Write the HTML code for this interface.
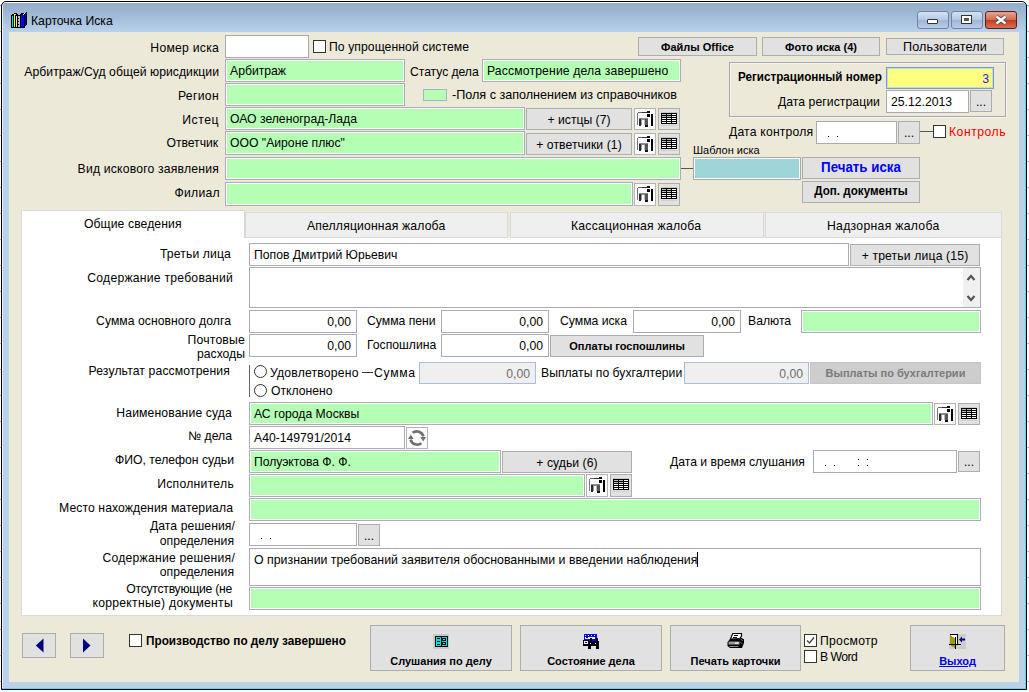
<!DOCTYPE html><html><head><meta charset="utf-8"><style>
html,body{margin:0;padding:0;}
body{width:1029px;height:692px;position:relative;overflow:hidden;background:#fff;font-family:"Liberation Sans",sans-serif;font-size:12px;color:#000;}
div{position:absolute;box-sizing:border-box;}
.t{white-space:nowrap;line-height:14px;}
.g{background:#b4ffb4;border:1px solid #aaadb8;box-shadow:inset 0 0 0 1px #fff;}
.w{background:#fff;border:1px solid #aaabb2;}
.b{background:#e1e1e1;border:1px solid #adadad;}
.ib1{background:#fbfbfb;border:1px solid #b4b4b4;}
.ib2{background:#e1e1e1;border:1px solid #adadad;}
.cb{background:#fff;border:1px solid #333;}
</style></head><body>

<div style="left:1px;top:1px;width:1026px;height:689px;border:1px solid #000;border-radius:5px 5px 0 0;background:#b9d1ea;box-shadow:inset -1px -1px 0 #62d2f4, inset 1px 0 0 #eef4fb;"></div>
<div style="left:0;top:5px;width:1px;height:1px;background:#a8a8a8"></div><div style="left:1027px;top:5px;width:2px;height:1px;background:#b8b8b8"></div>
<div style="left:0;top:31px;width:1px;height:1px;background:#a8a8a8"></div><div style="left:1027px;top:31px;width:2px;height:1px;background:#b8b8b8"></div>
<div style="left:0;top:57px;width:1px;height:1px;background:#a8a8a8"></div><div style="left:1027px;top:57px;width:2px;height:1px;background:#b8b8b8"></div>
<div style="left:0;top:83px;width:1px;height:1px;background:#a8a8a8"></div><div style="left:1027px;top:83px;width:2px;height:1px;background:#b8b8b8"></div>
<div style="left:0;top:109px;width:1px;height:1px;background:#a8a8a8"></div><div style="left:1027px;top:109px;width:2px;height:1px;background:#b8b8b8"></div>
<div style="left:0;top:135px;width:1px;height:1px;background:#a8a8a8"></div><div style="left:1027px;top:135px;width:2px;height:1px;background:#b8b8b8"></div>
<div style="left:0;top:161px;width:1px;height:1px;background:#a8a8a8"></div><div style="left:1027px;top:161px;width:2px;height:1px;background:#b8b8b8"></div>
<div style="left:0;top:187px;width:1px;height:1px;background:#a8a8a8"></div><div style="left:1027px;top:187px;width:2px;height:1px;background:#b8b8b8"></div>
<div style="left:0;top:213px;width:1px;height:1px;background:#a8a8a8"></div><div style="left:1027px;top:213px;width:2px;height:1px;background:#b8b8b8"></div>
<div style="left:0;top:239px;width:1px;height:1px;background:#a8a8a8"></div><div style="left:1027px;top:239px;width:2px;height:1px;background:#b8b8b8"></div>
<div style="left:0;top:265px;width:1px;height:1px;background:#a8a8a8"></div><div style="left:1027px;top:265px;width:2px;height:1px;background:#b8b8b8"></div>
<div style="left:0;top:291px;width:1px;height:1px;background:#a8a8a8"></div><div style="left:1027px;top:291px;width:2px;height:1px;background:#b8b8b8"></div>
<div style="left:0;top:317px;width:1px;height:1px;background:#a8a8a8"></div><div style="left:1027px;top:317px;width:2px;height:1px;background:#b8b8b8"></div>
<div style="left:0;top:343px;width:1px;height:1px;background:#a8a8a8"></div><div style="left:1027px;top:343px;width:2px;height:1px;background:#b8b8b8"></div>
<div style="left:0;top:369px;width:1px;height:1px;background:#a8a8a8"></div><div style="left:1027px;top:369px;width:2px;height:1px;background:#b8b8b8"></div>
<div style="left:0;top:395px;width:1px;height:1px;background:#a8a8a8"></div><div style="left:1027px;top:395px;width:2px;height:1px;background:#b8b8b8"></div>
<div style="left:0;top:421px;width:1px;height:1px;background:#a8a8a8"></div><div style="left:1027px;top:421px;width:2px;height:1px;background:#b8b8b8"></div>
<div style="left:0;top:447px;width:1px;height:1px;background:#a8a8a8"></div><div style="left:1027px;top:447px;width:2px;height:1px;background:#b8b8b8"></div>
<div style="left:0;top:473px;width:1px;height:1px;background:#a8a8a8"></div><div style="left:1027px;top:473px;width:2px;height:1px;background:#b8b8b8"></div>
<div style="left:0;top:499px;width:1px;height:1px;background:#a8a8a8"></div><div style="left:1027px;top:499px;width:2px;height:1px;background:#b8b8b8"></div>
<div style="left:0;top:525px;width:1px;height:1px;background:#a8a8a8"></div><div style="left:1027px;top:525px;width:2px;height:1px;background:#b8b8b8"></div>
<div style="left:0;top:551px;width:1px;height:1px;background:#a8a8a8"></div><div style="left:1027px;top:551px;width:2px;height:1px;background:#b8b8b8"></div>
<div style="left:0;top:577px;width:1px;height:1px;background:#a8a8a8"></div><div style="left:1027px;top:577px;width:2px;height:1px;background:#b8b8b8"></div>
<div style="left:0;top:603px;width:1px;height:1px;background:#a8a8a8"></div><div style="left:1027px;top:603px;width:2px;height:1px;background:#b8b8b8"></div>
<div style="left:0;top:629px;width:1px;height:1px;background:#a8a8a8"></div><div style="left:1027px;top:629px;width:2px;height:1px;background:#b8b8b8"></div>
<div style="left:0;top:655px;width:1px;height:1px;background:#a8a8a8"></div><div style="left:1027px;top:655px;width:2px;height:1px;background:#b8b8b8"></div>
<div style="left:0;top:681px;width:1px;height:1px;background:#a8a8a8"></div><div style="left:1027px;top:681px;width:2px;height:1px;background:#b8b8b8"></div>
<div style="left:3px;top:2px;width:1022px;height:30px;border-radius:4px 4px 0 0;background:linear-gradient(#fff 0,#fff 1px,#93adcb 1px,#9db6d3 10px,#b9d1ea 30px);"></div>
<div style="left:9px;top:32px;width:1010px;height:650px;background:#ece9d8;"></div>
<svg style="position:absolute;left:11px;top:12px" width="17" height="17" viewBox="0 0 17 17" shape-rendering="crispEdges">
<path d="M3 1 H6 V2 H7 V3 H9 V2 H10 V1 H15 V0 H16 V13 H15 V14 H14 V16 H0 V3 H1 V2 H3 Z" fill="#000"/>
<rect x="1" y="4" width="1" height="11" fill="#00e8e8"/><rect x="3" y="2" width="1" height="13" fill="#ffff00"/><rect x="4" y="2" width="1" height="1" fill="#ffff00"/>
<rect x="5" y="4" width="1" height="11" fill="#e0e0e0"/><rect x="7" y="4" width="2" height="11" fill="#c0c0c0"/><rect x="7" y="6" width="1" height="1" fill="#000"/><rect x="7" y="9" width="1" height="1" fill="#000"/><rect x="7" y="12" width="1" height="1" fill="#000"/>
<rect x="10" y="3" width="3" height="12" fill="#0000ff"/><rect x="14" y="2" width="1" height="11" fill="#0000c0"/><rect x="12" y="2" width="1" height="1" fill="#fff"/><rect x="13" y="1" width="1" height="1" fill="#fff"/>
</svg>
<div class="t" style="left:31px;top:14px;font-size:12.2px;color:#000">Карточка Иска</div>
<div style="left:917px;top:11px;width:32px;height:18px;border:1px solid #6d83a3;border-radius:3px;background:linear-gradient(#d5e2f1,#b4c8e2 50%,#9db5d6 51%,#b9cde6);"></div>
<div style="left:927px;top:19px;width:11px;height:5px;background:#fff;border:1px solid #333;border-radius:1px"></div>
<div style="left:951px;top:11px;width:32px;height:18px;border:1px solid #6d83a3;border-radius:3px;background:linear-gradient(#d5e2f1,#b4c8e2 50%,#9db5d6 51%,#b9cde6);"></div>
<div style="left:961px;top:15px;width:11px;height:9px;background:#fff;border:1px solid #333;"></div>
<div style="left:964px;top:18px;width:5px;height:3px;background:#555;"></div>
<div style="left:985px;top:11px;width:32px;height:18px;border:1px solid #5a1e14;border-radius:3px;background:linear-gradient(#e8a493,#d2674e 50%,#c43b1c 51%,#d8715a);"></div>
<svg style="position:absolute;left:994px;top:15px" width="14" height="10" viewBox="0 0 14 10"><path d="M2.5 1.5 L11.5 8.5 M11.5 1.5 L2.5 8.5" stroke="#444" stroke-width="4"/><path d="M2.5 1.5 L11.5 8.5 M11.5 1.5 L2.5 8.5" stroke="#fff" stroke-width="2.4"/></svg>
<div class="t" style="right:810px;top:41px;font-size:12.2px;letter-spacing:0.246px;">Номер иска</div>
<div class="w" style="left:225px;top:35px;width:84px;height:23px;"></div>
<div class="cb" style="left:313px;top:40px;width:13px;height:13px;"></div>
<div class="t" style="left:329px;top:40px;font-size:12.2px;letter-spacing:0.070px;">По упрощенной системе</div>
<div class="b" style="left:638px;top:37px;width:119px;height:19px;"></div>
<div class="t" style="left:638px;width:119px;text-align:center;top:40px;font-size:11px;;font-weight:bold">Файлы Office</div>
<div class="b" style="left:762px;top:37px;width:118px;height:19px;"></div>
<div class="t" style="left:762px;width:118px;text-align:center;top:40px;font-size:11px;;font-weight:bold">Фото иска (4)</div>
<div class="b" style="left:886px;top:38px;width:118px;height:17px;"></div>
<div class="t" style="left:886px;width:118px;text-align:center;top:40px;font-size:12.6px;letter-spacing:0.162px;">Пользователи</div>
<div class="t" style="right:810px;top:65px;font-size:12.2px;letter-spacing:0.036px;">Арбитраж/Суд общей юрисдикции</div>
<div class="g" style="left:225px;top:59px;width:180px;height:23px;"></div>
<div class="t" style="left:230px;top:64px;font-size:12.2px;">Арбитраж</div>
<div class="t" style="left:410px;top:65px;font-size:12.2px;letter-spacing:-0.060px;">Статус дела</div>
<div class="g" style="left:482px;top:59px;width:199px;height:23px;"></div>
<div class="t" style="left:487px;top:64px;font-size:12.2px;letter-spacing:0.145px;">Рассмотрение дела завершено</div>
<div class="t" style="right:810px;top:89px;font-size:12.2px;letter-spacing:0.320px;">Регион</div>
<div class="g" style="left:225px;top:83px;width:180px;height:23px;"></div>
<div style="left:423px;top:89px;width:24px;height:12px;background:#b4ffb4;border:1px solid #a4b4cc;"></div>
<div class="t" style="left:452px;top:88px;font-size:12.6px;">-Поля с заполнением из справочников</div>
<div style="left:729px;top:62px;width:277px;height:55px;border:1px solid #aaa6b4;box-shadow:inset 1px 1px 0 #f6f4ec, 1px 1px 0 #f6f4ec;"></div>
<div class="t" style="left:738px;top:70px;font-size:13px;transform:scaleX(0.897);transform-origin:left;font-weight:bold">Регистрационный номер</div>
<div style="left:886px;top:67px;width:108px;height:22px;background:#ffff80;border:1px solid #7a9cc6;box-shadow:inset 0 0 0 1px #c6d6ea"></div>
<div class="t" style="right:40px;top:72px;font-size:12.2px;color:#1a1af0">3</div>
<div class="t" style="right:149px;top:95px;font-size:12.2px;letter-spacing:0.066px;">Дата регистрации</div>
<div class="w" style="left:886px;top:90px;width:83px;height:23px;"></div>
<div class="t" style="left:891px;top:95px;font-size:12.2px;">25.12.2013</div>
<div class="b" style="left:970px;top:90px;width:22px;height:22px;"></div>
<div class="t" style="left:970px;width:22px;text-align:center;top:95px;font-size:12.2px;">...</div>
<div class="t" style="right:810px;top:113px;font-size:12.2px;letter-spacing:0.550px;">Истец</div>
<div class="g" style="left:225px;top:107px;width:300px;height:23px;"></div>
<div class="t" style="left:230px;top:112px;font-size:12.2px;">ОАО зеленоград-Лада</div>
<div class="b" style="left:526px;top:108px;width:106px;height:22px;"></div>
<div class="t" style="left:526px;width:106px;text-align:center;top:113px;font-size:12.2px;">+ истцы (7)</div>
<div class="ib1" style="left:634px;top:108px;width:22px;height:22px;"><svg width="22" height="22" viewBox="0 0 22 22" shape-rendering="crispEdges" style="position:absolute;left:-1px;top:-1px"><rect x="1" y="1" width="20" height="20" fill="#fbfbfb"/><rect x="4" y="4" width="4" height="1" fill="#666"/><rect x="8" y="4" width="5" height="1" fill="#333"/><rect x="13" y="3" width="3" height="2" fill="#111"/><rect x="3" y="5" width="1" height="12" fill="#777"/><rect x="13" y="6" width="3" height="3" fill="#000"/><rect x="17" y="6" width="2" height="12" fill="#000"/><rect x="5" y="10" width="9" height="2" fill="#8a8a8a"/><rect x="5" y="11" width="2" height="7" fill="#2a2a2a"/><rect x="7" y="12" width="1" height="5" fill="#9a9a9a"/><rect x="11" y="11" width="3" height="6" fill="#555"/><rect x="11" y="17" width="3" height="2" fill="#111"/><rect x="10" y="12" width="1" height="5" fill="#bbb"/></svg></div>
<div class="ib2" style="left:658px;top:108px;width:22px;height:22px;"><svg width="22" height="22" viewBox="0 0 22 22" shape-rendering="crispEdges" style="position:absolute;left:-1px;top:-1px"><rect x="3" y="4" width="16" height="1" fill="#c8c8c8"/><rect x="3" y="5" width="16" height="11" fill="#000"/><rect x="4" y="6" width="4" height="1" fill="#bbb"/><rect x="9" y="6" width="4" height="1" fill="#bbb"/><rect x="14" y="6" width="4" height="1" fill="#fff"/><rect x="4" y="8" width="4" height="1" fill="#bbb"/><rect x="9" y="8" width="4" height="1" fill="#bbb"/><rect x="14" y="8" width="4" height="1" fill="#fff"/><rect x="4" y="10" width="4" height="1" fill="#fff"/><rect x="9" y="10" width="4" height="1" fill="#fff"/><rect x="14" y="10" width="4" height="1" fill="#fff"/><rect x="4" y="12" width="4" height="1" fill="#fff"/><rect x="9" y="12" width="4" height="1" fill="#fff"/><rect x="14" y="12" width="4" height="1" fill="#fff"/><rect x="4" y="14" width="4" height="1" fill="#fff"/><rect x="9" y="14" width="4" height="1" fill="#fff"/><rect x="14" y="14" width="4" height="1" fill="#fff"/><rect x="3" y="17" width="16" height="1" fill="#d0d0d0"/></svg></div>
<div class="t" style="left:729px;top:125px;font-size:12.2px;letter-spacing:0.180px;">Дата контроля</div>
<div class="w" style="left:816px;top:121px;width:81px;height:23px;"></div>
<div style="left:828px;top:136px;width:1px;height:1px;background:#10004a"></div>
<div style="left:837px;top:136px;width:1px;height:1px;background:#10004a"></div>
<div class="b" style="left:898px;top:121px;width:22px;height:23px;"></div>
<div class="t" style="left:898px;width:22px;text-align:center;top:126px;font-size:12.2px;">...</div>
<div style="left:920px;top:131px;width:13px;height:1px;background:#555"></div>
<div class="cb" style="left:933px;top:125px;width:13px;height:13px;"></div>
<div class="t" style="left:949px;top:125px;font-size:12.2px;letter-spacing:0.521px;color:#ff0000">Контроль</div>
<div class="t" style="right:811px;top:136px;font-size:12.2px;letter-spacing:-0.050px;">Ответчик</div>
<div class="g" style="left:225px;top:131px;width:300px;height:24px;"></div>
<div class="t" style="left:230px;top:136px;font-size:12.2px;">ООО "Аироне плюс"</div>
<div class="b" style="left:526px;top:133px;width:106px;height:22px;"></div>
<div class="t" style="left:526px;width:106px;text-align:center;top:138px;font-size:12.2px;letter-spacing:0.084px;">+ ответчики (1)</div>
<div class="ib1" style="left:634px;top:133px;width:22px;height:22px;"><svg width="22" height="22" viewBox="0 0 22 22" shape-rendering="crispEdges" style="position:absolute;left:-1px;top:-1px"><rect x="1" y="1" width="20" height="20" fill="#fbfbfb"/><rect x="4" y="4" width="4" height="1" fill="#666"/><rect x="8" y="4" width="5" height="1" fill="#333"/><rect x="13" y="3" width="3" height="2" fill="#111"/><rect x="3" y="5" width="1" height="12" fill="#777"/><rect x="13" y="6" width="3" height="3" fill="#000"/><rect x="17" y="6" width="2" height="12" fill="#000"/><rect x="5" y="10" width="9" height="2" fill="#8a8a8a"/><rect x="5" y="11" width="2" height="7" fill="#2a2a2a"/><rect x="7" y="12" width="1" height="5" fill="#9a9a9a"/><rect x="11" y="11" width="3" height="6" fill="#555"/><rect x="11" y="17" width="3" height="2" fill="#111"/><rect x="10" y="12" width="1" height="5" fill="#bbb"/></svg></div>
<div class="ib2" style="left:658px;top:133px;width:22px;height:22px;"><svg width="22" height="22" viewBox="0 0 22 22" shape-rendering="crispEdges" style="position:absolute;left:-1px;top:-1px"><rect x="3" y="4" width="16" height="1" fill="#c8c8c8"/><rect x="3" y="5" width="16" height="11" fill="#000"/><rect x="4" y="6" width="4" height="1" fill="#bbb"/><rect x="9" y="6" width="4" height="1" fill="#bbb"/><rect x="14" y="6" width="4" height="1" fill="#fff"/><rect x="4" y="8" width="4" height="1" fill="#bbb"/><rect x="9" y="8" width="4" height="1" fill="#bbb"/><rect x="14" y="8" width="4" height="1" fill="#fff"/><rect x="4" y="10" width="4" height="1" fill="#fff"/><rect x="9" y="10" width="4" height="1" fill="#fff"/><rect x="14" y="10" width="4" height="1" fill="#fff"/><rect x="4" y="12" width="4" height="1" fill="#fff"/><rect x="9" y="12" width="4" height="1" fill="#fff"/><rect x="14" y="12" width="4" height="1" fill="#fff"/><rect x="4" y="14" width="4" height="1" fill="#fff"/><rect x="9" y="14" width="4" height="1" fill="#fff"/><rect x="14" y="14" width="4" height="1" fill="#fff"/><rect x="3" y="17" width="16" height="1" fill="#d0d0d0"/></svg></div>
<div class="t" style="right:810px;top:162px;font-size:12.2px;letter-spacing:0.190px;">Вид искового заявления</div>
<div class="g" style="left:225px;top:157px;width:456px;height:23px;"></div>
<div style="left:681px;top:168px;width:13px;height:1px;background:#555"></div>
<div class="t" style="left:693px;top:143px;font-size:11px;">Шаблон иска</div>
<div style="left:693px;top:157px;width:108px;height:23px;background:#9ed5d8;border:1px solid #a9a9a9;box-shadow:inset 0 0 0 1px #fff"></div>
<div class="b" style="left:802px;top:157px;width:118px;height:22px;"></div>
<div class="t" style="left:802px;width:118px;text-align:center;top:160px;font-size:14px;transform:scaleX(0.95);transform-origin:center;color:#0000ff;font-weight:bold">Печать иска</div>
<div class="t" style="right:809px;top:186px;font-size:12.2px;letter-spacing:0.280px;">Филиал</div>
<div class="g" style="left:225px;top:182px;width:408px;height:24px;"></div>
<div class="ib1" style="left:634px;top:183px;width:22px;height:23px;"><svg width="22" height="22" viewBox="0 0 22 22" shape-rendering="crispEdges" style="position:absolute;left:-1px;top:-1px"><rect x="1" y="1" width="20" height="20" fill="#fbfbfb"/><rect x="4" y="4" width="4" height="1" fill="#666"/><rect x="8" y="4" width="5" height="1" fill="#333"/><rect x="13" y="3" width="3" height="2" fill="#111"/><rect x="3" y="5" width="1" height="12" fill="#777"/><rect x="13" y="6" width="3" height="3" fill="#000"/><rect x="17" y="6" width="2" height="12" fill="#000"/><rect x="5" y="10" width="9" height="2" fill="#8a8a8a"/><rect x="5" y="11" width="2" height="7" fill="#2a2a2a"/><rect x="7" y="12" width="1" height="5" fill="#9a9a9a"/><rect x="11" y="11" width="3" height="6" fill="#555"/><rect x="11" y="17" width="3" height="2" fill="#111"/><rect x="10" y="12" width="1" height="5" fill="#bbb"/></svg></div>
<div class="ib2" style="left:658px;top:183px;width:22px;height:23px;"><svg width="22" height="22" viewBox="0 0 22 22" shape-rendering="crispEdges" style="position:absolute;left:-1px;top:-1px"><rect x="3" y="4" width="16" height="1" fill="#c8c8c8"/><rect x="3" y="5" width="16" height="11" fill="#000"/><rect x="4" y="6" width="4" height="1" fill="#bbb"/><rect x="9" y="6" width="4" height="1" fill="#bbb"/><rect x="14" y="6" width="4" height="1" fill="#fff"/><rect x="4" y="8" width="4" height="1" fill="#bbb"/><rect x="9" y="8" width="4" height="1" fill="#bbb"/><rect x="14" y="8" width="4" height="1" fill="#fff"/><rect x="4" y="10" width="4" height="1" fill="#fff"/><rect x="9" y="10" width="4" height="1" fill="#fff"/><rect x="14" y="10" width="4" height="1" fill="#fff"/><rect x="4" y="12" width="4" height="1" fill="#fff"/><rect x="9" y="12" width="4" height="1" fill="#fff"/><rect x="14" y="12" width="4" height="1" fill="#fff"/><rect x="4" y="14" width="4" height="1" fill="#fff"/><rect x="9" y="14" width="4" height="1" fill="#fff"/><rect x="14" y="14" width="4" height="1" fill="#fff"/><rect x="3" y="17" width="16" height="1" fill="#d0d0d0"/></svg></div>
<div class="b" style="left:802px;top:181px;width:118px;height:22px;"></div>
<div class="t" style="left:802px;width:118px;text-align:center;top:184px;font-size:13px;transform:scaleX(0.895);transform-origin:center;;font-weight:bold">Доп. документы</div>
<div style="left:21px;top:237px;width:981px;height:379px;background:#fff;border:1px solid #d9d9d9;border-top:none"></div>
<div style="left:21px;top:210px;width:224px;height:28px;background:#fff;border:1px solid #d9d9d9;border-bottom:none"></div>
<div style="left:245px;top:212px;width:263px;height:26px;background:#efefef;border:1px solid #d9d9d9;"></div>
<div style="left:510px;top:212px;width:254px;height:26px;background:#efefef;border:1px solid #d9d9d9;"></div>
<div style="left:765px;top:212px;width:237px;height:26px;background:#efefef;border:1px solid #d9d9d9;"></div>
<div class="t" style="left:84px;top:217px;font-size:12.2px;letter-spacing:0.082px;">Общие сведения</div>
<div class="t" style="left:307px;top:219px;font-size:12.2px;letter-spacing:0.163px;">Апелляционная жалоба</div>
<div class="t" style="left:571px;top:219px;font-size:12.2px;letter-spacing:0.222px;">Кассационная жалоба</div>
<div class="t" style="left:827px;top:219px;font-size:12.2px;letter-spacing:0.304px;">Надзорная жалоба</div>
<div class="t" style="right:798px;top:247px;font-size:12.2px;letter-spacing:0.120px;">Третьи лица</div>
<div class="w" style="left:249px;top:243px;width:600px;height:23px;"></div>
<div class="t" style="left:254px;top:248px;font-size:12.2px;">Попов Дмитрий Юрьевич</div>
<div class="b" style="left:850px;top:244px;width:130px;height:22px;"></div>
<div class="t" style="left:850px;width:130px;text-align:center;top:249px;font-size:12.2px;letter-spacing:0.143px;">+ третьи лица (15)</div>
<div class="t" style="right:796px;top:271px;font-size:12.2px;letter-spacing:0.230px;">Содержание требований</div>
<div class="w" style="left:249px;top:267px;width:732px;height:41px;"></div>
<div style="left:963px;top:268px;width:17px;height:39px;background:#f0f0f0"></div>
<svg style="position:absolute;left:966px;top:273px" width="10" height="30" viewBox="0 0 10 30"><path d="M1.5 7 L5 3 L8.5 7" stroke="#555" stroke-width="2.2" fill="none"/><path d="M1.5 23 L5 27 L8.5 23" stroke="#555" stroke-width="2.2" fill="none"/></svg>
<div class="t" style="right:798px;top:314px;font-size:12.2px;letter-spacing:0.040px;">Сумма основного долга</div>
<div class="w" style="left:249px;top:310px;width:108px;height:23px;"></div>
<div class="t" style="right:678px;top:315px;font-size:12.2px;">0,00</div>
<div class="t" style="left:367px;top:314px;font-size:12.2px;">Сумма пени</div>
<div class="w" style="left:441px;top:310px;width:108px;height:23px;"></div>
<div class="t" style="right:486px;top:315px;font-size:12.2px;">0,00</div>
<div class="t" style="left:560px;top:314px;font-size:12.2px;">Сумма иска</div>
<div class="w" style="left:633px;top:310px;width:108px;height:23px;"></div>
<div class="t" style="right:294px;top:315px;font-size:12.2px;">0,00</div>
<div class="t" style="left:748px;top:314px;font-size:12.2px;">Валюта</div>
<div class="g" style="left:801px;top:310px;width:180px;height:23px;"></div>
<div class="t" style="right:784px;top:333px;font-size:12.2px;letter-spacing:0.202px;">Почтовые</div>
<div class="t" style="right:784px;top:347px;font-size:12.2px;">расходы</div>
<div class="w" style="left:249px;top:334px;width:108px;height:23px;"></div>
<div class="t" style="right:678px;top:339px;font-size:12.2px;">0,00</div>
<div class="t" style="left:367px;top:338px;font-size:12.2px;">Госпошлина</div>
<div class="w" style="left:441px;top:334px;width:108px;height:23px;"></div>
<div class="t" style="right:486px;top:339px;font-size:12.2px;">0,00</div>
<div class="b" style="left:550px;top:335px;width:154px;height:22px;"></div>
<div class="t" style="left:550px;width:154px;text-align:center;top:339px;font-size:11px;;font-weight:bold">Оплаты госпошлины</div>
<div class="t" style="right:799px;top:364px;font-size:12.2px;letter-spacing:0.126px;">Результат рассмотрения</div>
<div style="left:249px;top:365px;width:1px;height:32px;background:#666"></div>
<div style="left:254px;top:365px;width:13px;height:13px;border:1px solid #333;border-radius:50%;background:#fff"></div>
<div style="left:254px;top:384px;width:13px;height:13px;border:1px solid #333;border-radius:50%;background:#fff"></div>
<div class="t" style="left:270px;top:366px;font-size:12.2px;letter-spacing:0.194px;">Удовлетворено</div>
<div style="left:362px;top:372px;width:11px;height:1px;background:#333"></div>
<div class="t" style="left:374px;top:366px;font-size:12.2px;letter-spacing:0.700px;">Сумма</div>
<div style="left:419px;top:362px;width:117px;height:22px;background:#efefef;border:1px solid #a8bedc;"></div>
<div class="t" style="right:499px;top:367px;font-size:12.2px;color:#6d6d6d">0,00</div>
<div class="t" style="left:541px;top:366px;font-size:12.2px;">Выплаты по бухгалтерии</div>
<div style="left:684px;top:362px;width:125px;height:22px;background:#efefef;border:1px solid #a8bedc;"></div>
<div class="t" style="right:226px;top:367px;font-size:12.2px;color:#6d6d6d">0,00</div>
<div style="left:810px;top:362px;width:171px;height:22px;background:#cdcdcd;border:1px solid #c6c6c6"></div>
<div class="t" style="left:810px;width:171px;text-align:center;top:366px;font-size:11px;color:#7a7a7a;font-weight:bold">Выплаты по бухгалтерии</div>
<div class="t" style="left:271px;top:384px;font-size:12.2px;">Отклонено</div>
<div class="t" style="right:797px;top:406px;font-size:12.2px;letter-spacing:0.126px;">Наименование суда</div>
<div class="g" style="left:249px;top:402px;width:684px;height:23px;"></div>
<div class="t" style="left:254px;top:407px;font-size:12.2px;">АС города Москвы</div>
<div class="ib1" style="left:934px;top:403px;width:22px;height:22px;"><svg width="22" height="22" viewBox="0 0 22 22" shape-rendering="crispEdges" style="position:absolute;left:-1px;top:-1px"><rect x="1" y="1" width="20" height="20" fill="#fbfbfb"/><rect x="4" y="4" width="4" height="1" fill="#666"/><rect x="8" y="4" width="5" height="1" fill="#333"/><rect x="13" y="3" width="3" height="2" fill="#111"/><rect x="3" y="5" width="1" height="12" fill="#777"/><rect x="13" y="6" width="3" height="3" fill="#000"/><rect x="17" y="6" width="2" height="12" fill="#000"/><rect x="5" y="10" width="9" height="2" fill="#8a8a8a"/><rect x="5" y="11" width="2" height="7" fill="#2a2a2a"/><rect x="7" y="12" width="1" height="5" fill="#9a9a9a"/><rect x="11" y="11" width="3" height="6" fill="#555"/><rect x="11" y="17" width="3" height="2" fill="#111"/><rect x="10" y="12" width="1" height="5" fill="#bbb"/></svg></div>
<div class="ib2" style="left:958px;top:403px;width:22px;height:22px;"><svg width="22" height="22" viewBox="0 0 22 22" shape-rendering="crispEdges" style="position:absolute;left:-1px;top:-1px"><rect x="3" y="4" width="16" height="1" fill="#c8c8c8"/><rect x="3" y="5" width="16" height="11" fill="#000"/><rect x="4" y="6" width="4" height="1" fill="#bbb"/><rect x="9" y="6" width="4" height="1" fill="#bbb"/><rect x="14" y="6" width="4" height="1" fill="#fff"/><rect x="4" y="8" width="4" height="1" fill="#bbb"/><rect x="9" y="8" width="4" height="1" fill="#bbb"/><rect x="14" y="8" width="4" height="1" fill="#fff"/><rect x="4" y="10" width="4" height="1" fill="#fff"/><rect x="9" y="10" width="4" height="1" fill="#fff"/><rect x="14" y="10" width="4" height="1" fill="#fff"/><rect x="4" y="12" width="4" height="1" fill="#fff"/><rect x="9" y="12" width="4" height="1" fill="#fff"/><rect x="14" y="12" width="4" height="1" fill="#fff"/><rect x="4" y="14" width="4" height="1" fill="#fff"/><rect x="9" y="14" width="4" height="1" fill="#fff"/><rect x="14" y="14" width="4" height="1" fill="#fff"/><rect x="3" y="17" width="16" height="1" fill="#d0d0d0"/></svg></div>
<div class="t" style="right:797px;top:429px;font-size:12.2px;">№ дела</div>
<div class="w" style="left:249px;top:426px;width:156px;height:23px;"></div>
<div class="t" style="left:254px;top:431px;font-size:12.2px;">А40-149791/2014</div>
<div class="ib1" style="left:406px;top:427px;width:22px;height:22px;"></div>
<svg style="position:absolute;left:404px;top:425px" width="26" height="26" viewBox="0 0 26 26"><path d="M8.6 7.8 A6.8 6.8 0 0 1 19.4 11.4" stroke="#707070" stroke-width="2.7" fill="none"/><path d="M16.3 12 L22 12 L19.2 16.6 Z" fill="#707070"/><path d="M17.4 18.2 A6.8 6.8 0 0 1 6.6 14.6" stroke="#707070" stroke-width="2.7" fill="none"/><path d="M4 14 L9.7 14 L6.8 9.4 Z" fill="#707070"/></svg>
<div class="t" style="right:795px;top:453px;font-size:12.2px;letter-spacing:-0.000px;">ФИО, телефон судьи</div>
<div class="g" style="left:249px;top:450px;width:252px;height:23px;"></div>
<div class="t" style="left:254px;top:455px;font-size:12.2px;letter-spacing:-0.042px;">Полуэктова Ф. Ф.</div>
<div class="b" style="left:502px;top:451px;width:130px;height:22px;"></div>
<div class="t" style="left:502px;width:130px;text-align:center;top:456px;font-size:12.2px;letter-spacing:0.040px;">+ судьи (6)</div>
<div class="t" style="left:670px;top:455px;font-size:12.2px;">Дата и время слушания</div>
<div class="w" style="left:813px;top:450px;width:144px;height:23px;"></div>
<div style="left:825px;top:465px;width:1px;height:1px;background:#10004a"></div>
<div style="left:834px;top:465px;width:1px;height:1px;background:#10004a"></div>
<div style="left:858px;top:459px;width:1px;height:1px;background:#10004a"></div>
<div style="left:858px;top:465px;width:1px;height:1px;background:#10004a"></div>
<div style="left:867px;top:459px;width:1px;height:1px;background:#10004a"></div>
<div style="left:867px;top:465px;width:1px;height:1px;background:#10004a"></div>
<div class="b" style="left:958px;top:451px;width:22px;height:21px;"></div>
<div class="t" style="left:958px;width:22px;text-align:center;top:455px;font-size:12.2px;">...</div>
<div class="t" style="right:795px;top:477px;font-size:12.2px;letter-spacing:0.260px;">Исполнитель</div>
<div class="g" style="left:249px;top:474px;width:336px;height:23px;"></div>
<div class="ib1" style="left:586px;top:474px;width:22px;height:23px;"><svg width="22" height="22" viewBox="0 0 22 22" shape-rendering="crispEdges" style="position:absolute;left:-1px;top:-1px"><rect x="1" y="1" width="20" height="20" fill="#fbfbfb"/><rect x="4" y="4" width="4" height="1" fill="#666"/><rect x="8" y="4" width="5" height="1" fill="#333"/><rect x="13" y="3" width="3" height="2" fill="#111"/><rect x="3" y="5" width="1" height="12" fill="#777"/><rect x="13" y="6" width="3" height="3" fill="#000"/><rect x="17" y="6" width="2" height="12" fill="#000"/><rect x="5" y="10" width="9" height="2" fill="#8a8a8a"/><rect x="5" y="11" width="2" height="7" fill="#2a2a2a"/><rect x="7" y="12" width="1" height="5" fill="#9a9a9a"/><rect x="11" y="11" width="3" height="6" fill="#555"/><rect x="11" y="17" width="3" height="2" fill="#111"/><rect x="10" y="12" width="1" height="5" fill="#bbb"/></svg></div>
<div class="ib2" style="left:610px;top:474px;width:22px;height:23px;"><svg width="22" height="22" viewBox="0 0 22 22" shape-rendering="crispEdges" style="position:absolute;left:-1px;top:-1px"><rect x="3" y="4" width="16" height="1" fill="#c8c8c8"/><rect x="3" y="5" width="16" height="11" fill="#000"/><rect x="4" y="6" width="4" height="1" fill="#bbb"/><rect x="9" y="6" width="4" height="1" fill="#bbb"/><rect x="14" y="6" width="4" height="1" fill="#fff"/><rect x="4" y="8" width="4" height="1" fill="#bbb"/><rect x="9" y="8" width="4" height="1" fill="#bbb"/><rect x="14" y="8" width="4" height="1" fill="#fff"/><rect x="4" y="10" width="4" height="1" fill="#fff"/><rect x="9" y="10" width="4" height="1" fill="#fff"/><rect x="14" y="10" width="4" height="1" fill="#fff"/><rect x="4" y="12" width="4" height="1" fill="#fff"/><rect x="9" y="12" width="4" height="1" fill="#fff"/><rect x="14" y="12" width="4" height="1" fill="#fff"/><rect x="4" y="14" width="4" height="1" fill="#fff"/><rect x="9" y="14" width="4" height="1" fill="#fff"/><rect x="14" y="14" width="4" height="1" fill="#fff"/><rect x="3" y="17" width="16" height="1" fill="#d0d0d0"/></svg></div>
<div class="t" style="right:796px;top:501px;font-size:12.2px;letter-spacing:0.080px;">Место нахождения материала</div>
<div class="g" style="left:249px;top:498px;width:732px;height:23px;"></div>
<div class="t" style="right:794px;top:519px;font-size:12.2px;letter-spacing:0.083px;">Дата решения/</div>
<div class="t" style="right:795px;top:534px;font-size:12.2px;">определения</div>
<div class="w" style="left:249px;top:523px;width:108px;height:23px;"></div>
<div style="left:261px;top:538px;width:1px;height:1px;background:#10004a"></div>
<div style="left:270px;top:538px;width:1px;height:1px;background:#10004a"></div>
<div class="b" style="left:358px;top:524px;width:22px;height:22px;"></div>
<div class="t" style="left:358px;width:22px;text-align:center;top:529px;font-size:12.2px;">...</div>
<div class="t" style="right:794px;top:551px;font-size:12.2px;letter-spacing:0.222px;">Содержание решения/</div>
<div class="t" style="right:795px;top:565px;font-size:12.2px;">определения</div>
<div class="w" style="left:249px;top:548px;width:732px;height:38px;"></div>
<div class="t" style="left:254px;top:553px;font-size:12.35px;">О признании требований заявителя обоснованными и введении наблюдения</div>
<div style="left:697px;top:552px;width:1px;height:15px;background:#000"></div>
<div class="t" style="right:797px;top:582px;font-size:12.2px;letter-spacing:-0.266px;">Отсутствующие (не</div>
<div class="t" style="right:796px;top:596px;font-size:12.2px;letter-spacing:0.270px;">корректные) документы</div>
<div class="g" style="left:249px;top:587px;width:732px;height:23px;"></div>
<div class="b" style="left:22px;top:633px;width:34px;height:25px;"></div>
<svg style="position:absolute;left:30px;top:635px" width="20" height="20" viewBox="0 0 20 20"><path d="M13.5 3.5 L5.8 10.5 L13.5 17.5 Z" fill="#000080"/></svg>
<div class="b" style="left:70px;top:633px;width:34px;height:25px;"></div>
<svg style="position:absolute;left:78px;top:635px" width="20" height="20" viewBox="0 0 20 20"><path d="M5 3.5 L12.5 10.5 L5 17.5 Z" fill="#000080"/></svg>
<div class="cb" style="left:129px;top:634px;width:13px;height:13px;"></div>
<div class="t" style="left:146px;top:634px;font-size:13.3px;transform:scaleX(0.886);transform-origin:left;font-weight:bold">Производство по делу завершено</div>
<div class="b" style="left:370px;top:625px;width:142px;height:46px;"></div>
<div class="t" style="left:370px;width:142px;text-align:center;top:654px;font-size:11px;;font-weight:bold">Слушания по делу</div>
<div class="b" style="left:520px;top:625px;width:142px;height:46px;"></div>
<div class="t" style="left:520px;width:142px;text-align:center;top:654px;font-size:11px;;font-weight:bold">Состояние дела</div>
<div class="b" style="left:670px;top:625px;width:131px;height:46px;"></div>
<div class="t" style="left:670px;width:131px;text-align:center;top:654px;font-size:11px;;font-weight:bold">Печать карточки</div>
<svg style="position:absolute;left:433px;top:634px" width="16" height="15" viewBox="0 0 16 15" shape-rendering="crispEdges"><rect x="0" y="0" width="16" height="15" fill="#c8c8c8"/><rect x="2" y="2" width="13" height="11" fill="#000"/><rect x="3" y="3" width="11" height="9" fill="#00e0e0"/><rect x="8" y="3" width="1" height="9" fill="#000"/><rect x="4" y="4" width="3" height="1" fill="#000"/><rect x="4" y="7" width="3" height="1" fill="#000"/><rect x="4" y="10" width="3" height="1" fill="#000"/><rect x="9" y="4" width="4" height="3" fill="#000"/><rect x="10" y="5" width="2" height="1" fill="#00e0e0"/><rect x="9" y="8" width="4" height="3" fill="#000"/><rect x="10" y="9" width="2" height="1" fill="#00e0e0"/></svg>
<svg style="position:absolute;left:583px;top:633px" width="17" height="17" viewBox="0 0 17 17" shape-rendering="crispEdges"><rect x="1" y="1" width="13" height="7" fill="#0000ff"/><rect x="2" y="2" width="1" height="1" fill="#fff"/><rect x="5" y="2" width="1" height="1" fill="#fff"/><rect x="8" y="2" width="1" height="1" fill="#fff"/><rect x="11" y="2" width="1" height="1" fill="#fff"/><rect x="2" y="4" width="10" height="2" fill="#fff"/><rect x="3" y="4" width="2" height="1" fill="#000"/><rect x="0" y="7" width="6" height="6" fill="#000"/><rect x="1" y="8" width="4" height="3" fill="#fff"/><rect x="2" y="9" width="2" height="1" fill="#000"/><rect x="7" y="5" width="2" height="3" fill="#000"/><rect x="13" y="5" width="2" height="3" fill="#000"/><rect x="5" y="8" width="11" height="5" fill="#000"/><rect x="7" y="10" width="1" height="1" fill="#fff"/><rect x="12" y="10" width="1" height="1" fill="#fff"/><rect x="5" y="12" width="3" height="4" fill="#000"/><rect x="13" y="12" width="3" height="4" fill="#000"/></svg>
<svg style="position:absolute;left:727px;top:633px" width="18" height="16" viewBox="0 0 18 16"><path d="M6 0.5 H14.5 V3 L12.5 6 H3.5 L5.5 1 Z" fill="#fff" stroke="#000" stroke-width="1.2"/><path d="M7 2.5 H11 M6 4.5 H10" stroke="#000" stroke-width="1"/><path d="M3 6 L15 5 L17 6.5 L17 10 L15 15 H3 L0.5 13 V9 Z" fill="#000"/><rect x="1.5" y="8.5" width="11" height="3" fill="#9a9a9a"/><rect x="8" y="9.5" width="3.5" height="1.3" fill="#fff"/><rect x="2.5" y="13" width="9" height="1" fill="#888"/><path d="M13.5 6 L16 8 M13 9 L15.5 11" stroke="#888" stroke-width="0.8"/></svg>
<div style="left:804px;top:634px;width:13px;height:13px;border:1px solid #333;background:#fff"></div>
<svg style="position:absolute;left:806px;top:636px" width="9" height="9" viewBox="0 0 9 9"><path d="M1 4.5 L3.5 7 L8 1.5" stroke="#404040" stroke-width="1.3" fill="none"/></svg>
<div class="t" style="left:820px;top:634px;font-size:12.2px;letter-spacing:0.272px;">Просмотр</div>
<div class="cb" style="left:804px;top:650px;width:13px;height:13px;"></div>
<div class="t" style="left:820px;top:650px;font-size:12.2px;letter-spacing:-0.540px;">В Word</div>
<div class="b" style="left:910px;top:625px;width:95px;height:46px;"></div>
<div class="t" style="left:910px;width:95px;text-align:center;top:654px;font-size:11px;color:#0000e0;text-decoration:underline;font-weight:bold">Выход</div>
<svg style="position:absolute;left:949px;top:633px" width="17" height="16" viewBox="0 0 17 16" shape-rendering="crispEdges"><rect x="0" y="1" width="17" height="15" fill="#cdcdcd"/><rect x="1" y="1" width="8" height="1" fill="#000"/><rect x="1" y="1" width="1" height="11" fill="#000"/><rect x="8" y="1" width="1" height="11" fill="#000"/><rect x="2" y="2" width="6" height="10" fill="#fff"/><path d="M1 2 L6 5 V15 L1 12 Z" fill="#a0a000"/><rect x="6" y="4" width="1" height="12" fill="#000"/><rect x="0" y="11" width="12" height="1" fill="#000"/><path d="M10 6.5 L13 3.5 V5.5 H16 V7.5 H13 V9.5 Z" fill="#000090" shape-rendering="geometricPrecision"/></svg>
</body></html>
